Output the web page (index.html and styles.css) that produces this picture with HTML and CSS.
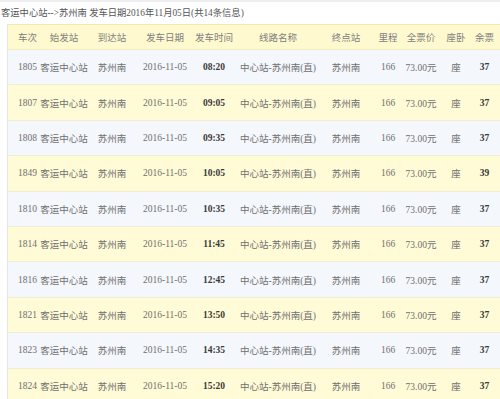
FILE: index.html
```html
<!DOCTYPE html>
<html>
<head>
<meta charset="utf-8">
<link rel="stylesheet" href="styles.css">
</head>
<body>
<div class="wrap">
  <div class="title">客运中心站--&gt;苏州南 发车日期2016年11月05日(共14条信息)</div>
  <div class="grid">
    <div class="row head"><span>车次</span><span>始发站</span><span>到达站</span><span>发车日期</span><span>发车时间</span><span>线路名称</span><span>终点站</span><span>里程</span><span>全票价</span><span>座卧</span><span>余票</span></div>
    <div class="row odd"><span>1805</span><span>客运中心站</span><span>苏州南</span><span>2016-11-05</span><span class="b">08:20</span><span>中心站-苏州南(直)</span><span>苏州南</span><span>166</span><span>73.00元</span><span>座</span><span class="b">37</span></div>
    <div class="row even"><span>1807</span><span>客运中心站</span><span>苏州南</span><span>2016-11-05</span><span class="b">09:05</span><span>中心站-苏州南(直)</span><span>苏州南</span><span>166</span><span>73.00元</span><span>座</span><span class="b">37</span></div>
    <div class="row odd"><span>1808</span><span>客运中心站</span><span>苏州南</span><span>2016-11-05</span><span class="b">09:35</span><span>中心站-苏州南(直)</span><span>苏州南</span><span>166</span><span>73.00元</span><span>座</span><span class="b">37</span></div>
    <div class="row even"><span>1849</span><span>客运中心站</span><span>苏州南</span><span>2016-11-05</span><span class="b">10:05</span><span>中心站-苏州南(直)</span><span>苏州南</span><span>166</span><span>73.00元</span><span>座</span><span class="b">39</span></div>
    <div class="row odd"><span>1810</span><span>客运中心站</span><span>苏州南</span><span>2016-11-05</span><span class="b">10:35</span><span>中心站-苏州南(直)</span><span>苏州南</span><span>166</span><span>73.00元</span><span>座</span><span class="b">37</span></div>
    <div class="row even"><span>1814</span><span>客运中心站</span><span>苏州南</span><span>2016-11-05</span><span class="b">11:45</span><span>中心站-苏州南(直)</span><span>苏州南</span><span>166</span><span>73.00元</span><span>座</span><span class="b">37</span></div>
    <div class="row odd"><span>1816</span><span>客运中心站</span><span>苏州南</span><span>2016-11-05</span><span class="b">12:45</span><span>中心站-苏州南(直)</span><span>苏州南</span><span>166</span><span>73.00元</span><span>座</span><span class="b">37</span></div>
    <div class="row even"><span>1821</span><span>客运中心站</span><span>苏州南</span><span>2016-11-05</span><span class="b">13:50</span><span>中心站-苏州南(直)</span><span>苏州南</span><span>166</span><span>73.00元</span><span>座</span><span class="b">37</span></div>
    <div class="row odd"><span>1823</span><span>客运中心站</span><span>苏州南</span><span>2016-11-05</span><span class="b">14:35</span><span>中心站-苏州南(直)</span><span>苏州南</span><span>166</span><span>73.00元</span><span>座</span><span class="b">37</span></div>
    <div class="row even"><span>1824</span><span>客运中心站</span><span>苏州南</span><span>2016-11-05</span><span class="b">15:20</span><span>中心站-苏州南(直)</span><span>苏州南</span><span>166</span><span>73.00元</span><span>座</span><span class="b">37</span></div>
  </div>
</div>
</body>
</html>
```
FILE: styles.css
```css
html, body {
  margin: 0;
  padding: 0;
  background: #ffffff;
  overflow: hidden;
}
body {
  font-family: "Liberation Serif", "Noto Sans CJK SC", serif;
  font-size: 9.5px;
  color: #707070;
}
.wrap {
  border-top: 2px solid #eeeeee;
  width: 500px;
}
.title {
  height: 22px;
  line-height: 22px;
  padding-left: 1px;
  color: #555555;
  white-space: nowrap;
  font-size: 9.3px;
}
.grid {
  margin-left: 7px;
  width: 493px;
  box-sizing: border-box;
  border-left: 1px solid #e6e6e6;
}
.row {
  display: grid;
  grid-template-columns: 39px 34px 62px 44px 54px 74px 62px 22px 44px 26px 31px;
  align-items: center;
  justify-items: center;
  height: 35.4px;
  box-sizing: border-box;
  border-bottom: 1px solid #f1ecd2;
  white-space: nowrap;
}
.row.head {
  height: 26px;
  background: #fff9cf;
  border-top: 1px solid #f3e8ae;
  border-bottom: 1px solid #f2ebc4;
  color: #808080;
}
.row.odd { background: #f4f7fb; }
.row.even { background: #fffbd6; }
.row .b {
  font-weight: bold;
  color: #3a3a3a;
}
```
